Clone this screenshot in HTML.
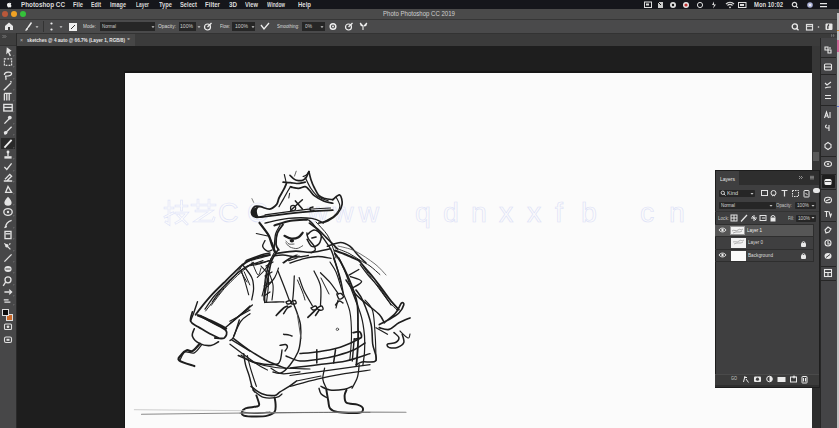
<!DOCTYPE html>
<html><head><meta charset="utf-8">
<style>
*{margin:0;padding:0;box-sizing:border-box}
html,body{width:839px;height:428px;overflow:hidden;background:#1e1e1e;font-family:"Liberation Sans",sans-serif;color:#ddd;position:relative}
.a{position:absolute}
.t{position:absolute;white-space:nowrap;line-height:1;transform-origin:0 0}
svg{position:absolute;overflow:visible}
</style></head><body>
<div class="a" style="left:0px;top:0px;width:839px;height:9px;background:#15161b;"></div>
<div class="a" style="left:0px;top:9px;width:839px;height:10px;background:#4a4a4a;"></div>
<div class="a" style="left:0px;top:19px;width:839px;height:1px;background:#363636;"></div>
<div class="a" style="left:0px;top:20px;width:839px;height:13px;background:#4a4a4b;"></div>
<div class="a" style="left:16px;top:33px;width:823px;height:13.2px;background:#3b3b3b;"></div>
<div class="a" style="left:0px;top:32.6px;width:839px;height:1px;background:#333333;"></div>
<div class="a" style="left:16px;top:33.6px;width:118.5px;height:12.6px;background:#474747;"></div>
<div class="a" style="left:0px;top:33px;width:16px;height:395px;background:#474748;"></div>
<div class="a" style="left:0px;top:33px;width:16px;height:12px;background:#3e3e3e;"></div>
<div class="a" style="left:0px;top:44.5px;width:16px;height:0.8px;background:#333333;"></div>
<div class="a" style="left:16px;top:33px;width:1px;height:395px;background:#2a2a2a;"></div>
<div class="a" style="left:123.5px;top:71.3px;width:690px;height:358px;background:#161616;"></div>
<div class="a" style="left:125px;top:72.8px;width:687px;height:356px;background:#fbfbfb;"></div>
<div class="a" style="left:812px;top:46px;width:8px;height:342px;background:#373737;"></div>
<div class="a" style="left:812px;top:388px;width:8px;height:40px;background:#2d2d2d;"></div>
<div class="a" style="left:812.5px;top:152px;width:6px;height:9px;background:#5a5a5a;"></div>
<div class="a" style="left:820px;top:38px;width:17px;height:390px;background:#444446;"></div>
<div class="a" style="left:820px;top:38px;width:1px;height:390px;background:#262626;"></div>
<div class="a" style="left:837px;top:13px;width:2px;height:415px;background:#c2c2c2;"></div>
<svg style="left:1.5px;top:0px;" width="20" height="9" viewBox="0 0 20 9"><path d="M7.3 3.3c-.6-.4-1.7-.3-2.1.5-.6 1 .1 3.3 1 3.6.4.1.7-.2 1.1-.2s.7.3 1.1.2c.6-.2 1-1.2 1.1-1.6-.7-.3-.9-1.5-.2-2.2-.4-.6-1.4-.6-2-.3zM7.5 2.9c0-.6.4-1 .9-1.1" fill="#f0f0f0"/></svg>
<div class="t" style="left:21px;top:1.91px;font-size:6.3px;font-weight:bold;color:#dcdcdc;transform:scaleX(1.006);">Photoshop CC</div>
<div class="t" style="left:73px;top:1.91px;font-size:6.3px;font-weight:bold;color:#dcdcdc;transform:scaleX(0.921);">File</div>
<div class="t" style="left:91px;top:1.91px;font-size:6.3px;font-weight:bold;color:#dcdcdc;transform:scaleX(0.840);">Edit</div>
<div class="t" style="left:110px;top:1.91px;font-size:6.3px;font-weight:bold;color:#dcdcdc;transform:scaleX(0.879);">Image</div>
<div class="t" style="left:136px;top:1.91px;font-size:6.3px;font-weight:bold;color:#dcdcdc;transform:scaleX(0.773);">Layer</div>
<div class="t" style="left:159px;top:1.91px;font-size:6.3px;font-weight:bold;color:#dcdcdc;transform:scaleX(0.913);">Type</div>
<div class="t" style="left:180px;top:1.91px;font-size:6.3px;font-weight:bold;color:#dcdcdc;transform:scaleX(0.916);">Select</div>
<div class="t" style="left:205px;top:1.91px;font-size:6.3px;font-weight:bold;color:#dcdcdc;transform:scaleX(0.974);">Filter</div>
<div class="t" style="left:229px;top:1.91px;font-size:6.3px;font-weight:bold;color:#dcdcdc;transform:scaleX(0.993);">3D</div>
<div class="t" style="left:245px;top:1.91px;font-size:6.3px;font-weight:bold;color:#dcdcdc;transform:scaleX(0.913);">View</div>
<div class="t" style="left:267px;top:1.91px;font-size:6.3px;font-weight:bold;color:#dcdcdc;transform:scaleX(0.747);">Window</div>
<div class="t" style="left:298px;top:1.91px;font-size:6.3px;font-weight:bold;color:#dcdcdc;transform:scaleX(0.952);">Help</div>
<div class="t" style="left:754px;top:1.91px;font-size:6.3px;font-weight:bold;color:#dcdcdc;transform:scaleX(0.941);">Mon 10:02</div>
<svg style="left:644px;top:1px;" width="60" height="8" viewBox="0 0 60 8"><rect x="0.5" y="1" width="7" height="5.5" fill="none" stroke="#ddd" stroke-width="1"/><rect x="2" y="2.5" width="3" height="2" fill="#ddd"/><path d="M14 1h5v6h-5z" fill="#ccc"/><path d="M14 1l3 3" stroke="#111" stroke-width="1"/><circle cx="29" cy="4" r="3" fill="#ddd"/><circle cx="29" cy="4" r="1.2" fill="#111"/><circle cx="42" cy="4" r="3" fill="#e8e8e8"/><circle cx="42" cy="4" r="1.6" fill="#c03030"/><circle cx="56" cy="4" r="2.6" fill="none" stroke="#ddd" stroke-width="1"/></svg>
<svg style="left:710px;top:1px;" width="40" height="8" viewBox="0 0 40 8"><path d="M4 0.5l-2 3.5h2l-1 3.5 3-4h-2z" fill="#ddd"/><path d="M16 3a6 6 0 0 1 8 0M17.5 4.5a3.5 3.5 0 0 1 5 0" fill="none" stroke="#ddd" stroke-width="1.2"/><circle cx="20" cy="6.3" r="0.9" fill="#ddd"/><rect x="28.5" y="1.5" width="7.5" height="5" fill="none" stroke="#ddd" stroke-width="1"/><rect x="30" y="3" width="4" height="2" fill="#ddd"/></svg>
<svg style="left:790px;top:1px;" width="40" height="8" viewBox="0 0 40 8"><circle cx="4.5" cy="3.5" r="2.2" fill="none" stroke="#ddd" stroke-width="1.2"/><path d="M6 5l1.8 1.8" stroke="#ddd" stroke-width="1.2"/><circle cx="20" cy="4" r="2.8" fill="#aab0d8"/><circle cx="20" cy="4" r="1.3" fill="#eee"/><path d="M30 2.7h7M30 5.7h7" stroke="#e6e6e6" stroke-width="1.3"/></svg>
<div class="a" style="left:2px;top:11.3px;width:6px;height:6px;background:#b8583a;border-radius:50%"></div>
<div class="a" style="left:10.7px;top:11.3px;width:6px;height:6px;background:#f0a224;border-radius:50%"></div>
<div class="a" style="left:19.5px;top:11.3px;width:6px;height:6px;background:#35c23a;border-radius:50%"></div>
<div class="t" style="left:383px;top:10.08px;font-size:8px;font-weight:normal;color:#d0d0d0;transform:scaleX(0.756);">Photo Photoshop CC 2019</div>
<svg style="left:4px;top:21px;" width="12" height="11" viewBox="0 0 12 11"><path d="M5 1.5l-4 3.5v4h8v-4z" fill="#e8e8e8"/><rect x="4" y="6" width="2" height="3" fill="#3e3e3e"/></svg>
<svg style="left:24px;top:21px;" width="10" height="11" viewBox="0 0 10 11"><path d="M7.5 1.5l-3.5 5" stroke="#eee" stroke-width="1.4"/><path d="M3.5 6.5l-1.8 2.8 1.5-.5z" fill="#eee" stroke="#eee" stroke-width="1"/></svg>
<svg style="left:35px;top:25px;" width="4" height="4" viewBox="0 0 4 4"><path d="M0.5 1.2h3l-1.5 1.8z" fill="#ccc"/></svg>
<div class="a" style="left:43px;top:21px;width:1px;height:11px;background:#333;"></div>
<svg style="left:48px;top:21px;" width="8" height="11" viewBox="0 0 8 11"><circle cx="3.5" cy="2.5" r="1.1" fill="#eee"/><circle cx="3.5" cy="8.5" r="1.1" fill="#eee"/></svg>
<svg style="left:59px;top:25px;" width="4" height="4" viewBox="0 0 4 4"><path d="M0.5 1.2h3l-1.5 1.8z" fill="#ccc"/></svg>
<div class="a" style="left:69px;top:22.5px;width:8px;height:8px;background:#f0f0f0;"></div>
<svg style="left:69px;top:22.5px;" width="8" height="8" viewBox="0 0 8 8"><path d="M2 6l4-4" stroke="#333" stroke-width="1"/></svg>
<div class="t" style="left:83px;top:24.05px;font-size:5px;font-weight:normal;color:#dadada;transform:scaleX(0.935);">Mode:</div>
<div class="a" style="left:100px;top:22px;width:55px;height:9px;background:#262626;"></div>
<div class="t" style="left:102px;top:24.05px;font-size:5px;font-weight:normal;color:#cfcfcf;transform:scaleX(0.869);">Normal</div>
<svg style="left:151px;top:25px;" width="4" height="4" viewBox="0 0 4 4"><path d="M0.5 1.2h3l-1.5 1.8z" fill="#ccc"/></svg>
<div class="t" style="left:158px;top:24.05px;font-size:5px;font-weight:normal;color:#dadada;transform:scaleX(0.981);">Opacity:</div>
<div class="a" style="left:178.5px;top:22px;width:17px;height:9px;background:#262626;"></div>
<div class="t" style="left:180px;top:24.05px;font-size:5px;font-weight:normal;color:#cfcfcf;transform:scaleX(1.017);">100%</div>
<svg style="left:197px;top:25px;" width="4" height="4" viewBox="0 0 4 4"><path d="M0.5 1.2h3l-1.5 1.8z" fill="#ccc"/></svg>
<svg style="left:203px;top:22px;" width="10" height="9" viewBox="0 0 10 9"><circle cx="4.5" cy="5" r="3" fill="none" stroke="#eee" stroke-width="1.2"/><path d="M4.5 5l4-4" stroke="#eee" stroke-width="1.2"/></svg>
<div class="t" style="left:220px;top:24.05px;font-size:5px;font-weight:normal;color:#dadada;transform:scaleX(0.837);">Flow:</div>
<div class="a" style="left:232px;top:22px;width:23px;height:9px;background:#262626;"></div>
<div class="t" style="left:235px;top:24.05px;font-size:5px;font-weight:normal;color:#cfcfcf;transform:scaleX(1.017);">100%</div>
<svg style="left:251px;top:25px;" width="4" height="4" viewBox="0 0 4 4"><path d="M0.5 1.2h3l-1.5 1.8z" fill="#ccc"/></svg>
<svg style="left:260px;top:22px;" width="10" height="9" viewBox="0 0 10 9"><path d="M1 3l3 4 5-6" fill="none" stroke="#eee" stroke-width="1.3"/></svg>
<div class="t" style="left:277px;top:24.05px;font-size:5px;font-weight:normal;color:#dadada;transform:scaleX(0.870);">Smoothing:</div>
<div class="a" style="left:302px;top:22px;width:23px;height:9px;background:#262626;"></div>
<div class="t" style="left:305px;top:24.05px;font-size:5px;font-weight:normal;color:#cfcfcf;transform:scaleX(0.969);">0%</div>
<svg style="left:320px;top:25px;" width="4" height="4" viewBox="0 0 4 4"><path d="M0.5 1.2h3l-1.5 1.8z" fill="#ccc"/></svg>
<svg style="left:329px;top:22px;" width="10" height="9" viewBox="0 0 10 9"><circle cx="4" cy="4.5" r="2.8" fill="none" stroke="#eee" stroke-width="1.5"/><circle cx="4" cy="4.5" r="1" fill="#eee"/></svg>
<svg style="left:344px;top:22px;" width="10" height="9" viewBox="0 0 10 9"><circle cx="4.5" cy="5" r="3" fill="none" stroke="#eee" stroke-width="1.2"/><path d="M4.5 5l4-4" stroke="#eee" stroke-width="1.2"/></svg>
<svg style="left:359px;top:22px;" width="10" height="9" viewBox="0 0 10 9"><path d="M1 1l3 3v4M8 1l-3 3M2 1c-1 2 0 3 2 3M7 1c1 2 0 3-2 3" fill="none" stroke="#eee" stroke-width="1.1"/></svg>
<svg style="left:790px;top:22px;" width="48" height="10" viewBox="0 0 48 10"><circle cx="4.8" cy="4.5" r="2.6" fill="none" stroke="#eee" stroke-width="1.3"/><path d="M6.5 6.3l2 2" stroke="#eee" stroke-width="1.3"/><rect x="16.5" y="2.5" width="6" height="5.5" fill="none" stroke="#e0e0e0" stroke-width="1.2"/><path d="M16.5 4.3h6" stroke="#e0e0e0" stroke-width="1"/><circle cx="28.5" cy="5" r="0.8" fill="#ddd"/><rect x="35.5" y="1.5" width="7" height="6.5" rx="1" fill="#e6e6e6"/><path d="M39 2.5c-1.2 1-1.4 3-1 4.5" stroke="#333" stroke-width="1.2" fill="none"/></svg>
<div class="t" style="left:20px;top:37.85px;font-size:5px;font-weight:normal;color:#bbb;transform:scaleX(1.027);">×</div>
<div class="t" style="left:27px;top:37.91px;font-size:5.5px;font-weight:bold;color:#e8e8e8;transform:scaleX(0.841);">sketches @ 4 auto @ 66.7% (Layer 1, RGB/8)</div>
<div class="t" style="left:127px;top:37.85px;font-size:5px;font-weight:normal;color:#ccc;transform:scaleX(1.542);">*</div>
<svg style="left:1px;top:34px;" width="14" height="5" viewBox="0 0 14 5"><path d="M1.5 1l1.5 1.5-1.5 1.5M3.5 1l1.5 1.5-1.5 1.5" fill="none" stroke="#999" stroke-width="0.7"/></svg>
<div class="a" style="left:1px;top:138px;width:14px;height:11px;background:#2a2a2a;"></div>
<svg style="left:2px;top:46px;" width="10" height="10" viewBox="0 0 10 10"><g transform="scale(1.2)"><path d="M4 1l4 3-2 1 1.5 3-1 .5-1.5-3-1.5 1.5z" fill="#e4e4e4"/></g><path d="M11.5 9.5l1 0-1 1z" fill="#aaa"/></svg>
<svg style="left:2px;top:57px;" width="10" height="10" viewBox="0 0 10 10"><g transform="scale(1.2)"><rect x="2" y="1.5" width="6" height="5.5" fill="none" stroke="#ddd" stroke-width="1" stroke-dasharray="1.5 1"/></g><path d="M11.5 9.5l1 0-1 1z" fill="#aaa"/></svg>
<svg style="left:2px;top:68.5px;" width="10" height="10" viewBox="0 0 10 10"><g transform="scale(1.2)"><path d="M2 5c0-3 6-3 6-1s-4 2-5 2c0 1 1 2 0 3" fill="none" stroke="#e4e4e4" stroke-width="1.1"/></g><path d="M11.5 9.5l1 0-1 1z" fill="#aaa"/></svg>
<svg style="left:2px;top:79.5px;" width="10" height="10" viewBox="0 0 10 10"><g transform="scale(1.2)"><path d="M1.5 8.5l6-6" fill="none" stroke="#e4e4e4" stroke-width="1.1"/><path d="M7 1l1 1" fill="none" stroke="#e4e4e4" stroke-width="1.1"/></g><path d="M11.5 9.5l1 0-1 1z" fill="#aaa"/></svg>
<svg style="left:2px;top:91px;" width="10" height="10" viewBox="0 0 10 10"><g transform="scale(1.2)"><path d="M2 2v6M4 2v6M6 2v6M2 2h6" fill="none" stroke="#e4e4e4" stroke-width="1.1"/></g><path d="M11.5 9.5l1 0-1 1z" fill="#aaa"/></svg>
<svg style="left:2px;top:102px;" width="10" height="10" viewBox="0 0 10 10"><g transform="scale(1.2)"><rect x="1.5" y="2" width="7" height="5.5" fill="none" stroke="#e4e4e4" stroke-width="1.1"/><path d="M1.5 4.5h7" fill="none" stroke="#e4e4e4" stroke-width="1.1"/></g><path d="M11.5 9.5l1 0-1 1z" fill="#aaa"/></svg>
<svg style="left:2px;top:113.5px;" width="10" height="10" viewBox="0 0 10 10"><g transform="scale(1.2)"><path d="M2 8l4-4" fill="none" stroke="#e4e4e4" stroke-width="1.1"/><circle cx="6.5" cy="3" r="1.6" fill="#e4e4e4"/></g><path d="M11.5 9.5l1 0-1 1z" fill="#aaa"/></svg>
<svg style="left:2px;top:125px;" width="10" height="10" viewBox="0 0 10 10"><g transform="scale(1.2)"><path d="M2 7.5c1.5 0 2-1 2-2l4-4" fill="none" stroke="#e4e4e4" stroke-width="1.1"/><circle cx="3" cy="6.5" r="1.5" fill="#e4e4e4"/></g><path d="M11.5 9.5l1 0-1 1z" fill="#aaa"/></svg>
<svg style="left:2px;top:137.5px;" width="10" height="10" viewBox="0 0 10 10"><g transform="scale(1.2)"><path d="M2 8l6-6.5" stroke="#f0f0f0" stroke-width="1.5"/></g><path d="M11.5 9.5l1 0-1 1z" fill="#aaa"/></svg>
<svg style="left:2px;top:149px;" width="10" height="10" viewBox="0 0 10 10"><g transform="scale(1.2)"><rect x="2" y="6" width="6" height="2" fill="#e4e4e4"/><path d="M5 6V3" fill="none" stroke="#e4e4e4" stroke-width="1.1"/><circle cx="5" cy="2.5" r="1.2" fill="#e4e4e4"/></g><path d="M11.5 9.5l1 0-1 1z" fill="#aaa"/></svg>
<svg style="left:2px;top:160.5px;" width="10" height="10" viewBox="0 0 10 10"><g transform="scale(1.2)"><path d="M2 5l2 2 4-5" fill="none" stroke="#e4e4e4" stroke-width="1.1"/></g><path d="M11.5 9.5l1 0-1 1z" fill="#aaa"/></svg>
<svg style="left:2px;top:172px;" width="10" height="10" viewBox="0 0 10 10"><g transform="scale(1.2)"><path d="M1.5 7.5h7M2.5 6l4-4 1.5 1.5-4 4" fill="none" stroke="#e4e4e4" stroke-width="1.1"/></g><path d="M11.5 9.5l1 0-1 1z" fill="#aaa"/></svg>
<svg style="left:2px;top:183.5px;" width="10" height="10" viewBox="0 0 10 10"><g transform="scale(1.2)"><path d="M3 7l2-5 3 5z" fill="none" stroke="#e4e4e4" stroke-width="1.1"/></g><path d="M11.5 9.5l1 0-1 1z" fill="#aaa"/></svg>
<svg style="left:2px;top:195px;" width="10" height="10" viewBox="0 0 10 10"><g transform="scale(1.2)"><path d="M5 1.5c2 2 3 3.5 3 5a3 2.5 0 0 1-6 0c0-1.5 1-3 3-5z" fill="#e4e4e4"/></g><path d="M11.5 9.5l1 0-1 1z" fill="#aaa"/></svg>
<svg style="left:2px;top:206px;" width="10" height="10" viewBox="0 0 10 10"><g transform="scale(1.2)"><ellipse cx="5" cy="5" rx="3.5" ry="2.8" fill="none" stroke="#e4e4e4" stroke-width="1.1"/><circle cx="5" cy="5" r="1" fill="#e4e4e4"/></g><path d="M11.5 9.5l1 0-1 1z" fill="#aaa"/></svg>
<svg style="left:2px;top:218px;" width="10" height="10" viewBox="0 0 10 10"><g transform="scale(1.2)"><path d="M3 8c0-3 2-5 5-6" fill="none" stroke="#e4e4e4" stroke-width="1.1"/><path d="M2 8l2-1" fill="none" stroke="#e4e4e4" stroke-width="1.1"/></g><path d="M11.5 9.5l1 0-1 1z" fill="#aaa"/></svg>
<svg style="left:2px;top:229px;" width="10" height="10" viewBox="0 0 10 10"><g transform="scale(1.2)"><rect x="2.5" y="2" width="5" height="6" fill="none" stroke="#e4e4e4" stroke-width="1.1"/><path d="M3 4h4" fill="none" stroke="#e4e4e4" stroke-width="1.1"/></g><path d="M11.5 9.5l1 0-1 1z" fill="#aaa"/></svg>
<svg style="left:2px;top:240.5px;" width="10" height="10" viewBox="0 0 10 10"><g transform="scale(1.2)"><path d="M2 2l5 5M6 3l1-1" fill="none" stroke="#e4e4e4" stroke-width="1.1"/><circle cx="4" cy="4" r="1.4" fill="#e4e4e4"/></g><path d="M11.5 9.5l1 0-1 1z" fill="#aaa"/></svg>
<svg style="left:2px;top:252px;" width="10" height="10" viewBox="0 0 10 10"><g transform="scale(1.2)"><path d="M2 8l6-6" fill="none" stroke="#e4e4e4" stroke-width="1.1"/></g><path d="M11.5 9.5l1 0-1 1z" fill="#aaa"/></svg>
<svg style="left:2px;top:263px;" width="10" height="10" viewBox="0 0 10 10"><g transform="scale(1.2)"><ellipse cx="5" cy="5" rx="3" ry="2.5" fill="#e4e4e4"/><path d="M3 5h4" stroke="#3b3b3b" stroke-width="0.8"/></g><path d="M11.5 9.5l1 0-1 1z" fill="#aaa"/></svg>
<svg style="left:2px;top:274.5px;" width="10" height="10" viewBox="0 0 10 10"><g transform="scale(1.2)"><circle cx="5" cy="4" r="2.5" fill="none" stroke="#e4e4e4" stroke-width="1.1"/><path d="M3 6l-2 3" fill="none" stroke="#e4e4e4" stroke-width="1.1"/></g><path d="M11.5 9.5l1 0-1 1z" fill="#aaa"/></svg>
<svg style="left:2px;top:285.5px;" width="10" height="10" viewBox="0 0 10 10"><g transform="scale(1.2)"><path d="M2 5h6M6 3l2 2-2 2" fill="none" stroke="#e4e4e4" stroke-width="1.1"/></g><path d="M11.5 9.5l1 0-1 1z" fill="#aaa"/></svg>
<svg style="left:2px;top:295px;" width="10" height="10" viewBox="0 0 10 10"><g transform="scale(1.2)"><path d="M1.5 4h4M2 6h5" fill="none" stroke="#e4e4e4" stroke-width="1.1"/></g><path d="M11.5 9.5l1 0-1 1z" fill="#aaa"/></svg>
<div class="a" style="left:6px;top:314px;width:7px;height:7px;background:#c9692a;border:1px solid #ddd"></div>
<div class="a" style="left:2px;top:309px;width:7px;height:7px;background:#0c0c0c;border:1px solid #ddd"></div>
<svg style="left:3px;top:322px;" width="10" height="10" viewBox="0 0 10 10"><rect x="1.5" y="2" width="7" height="5.5" rx="1" fill="none" stroke="#e0e0e0" stroke-width="1.1"/><circle cx="5" cy="4.8" r="1.4" fill="#e0e0e0"/></svg>
<svg style="left:3px;top:335px;" width="10" height="10" viewBox="0 0 10 10"><rect x="1.5" y="2" width="7" height="5.5" rx="1.5" fill="none" stroke="#e0e0e0" stroke-width="1.1"/><rect x="3.5" y="3.8" width="3" height="2" fill="#e0e0e0"/></svg>
<div class="a" style="left:821px;top:57px;width:15px;height:1px;background:#262626;"></div>
<div class="a" style="left:821px;top:74px;width:15px;height:1px;background:#262626;"></div>
<div class="a" style="left:821px;top:105px;width:15px;height:1px;background:#262626;"></div>
<div class="a" style="left:821px;top:156px;width:15px;height:1px;background:#262626;"></div>
<div class="a" style="left:821px;top:174px;width:15px;height:1px;background:#262626;"></div>
<div class="a" style="left:821px;top:189px;width:15px;height:1px;background:#262626;"></div>
<div class="a" style="left:821px;top:221px;width:15px;height:1px;background:#262626;"></div>
<div class="a" style="left:821px;top:266px;width:15px;height:1px;background:#262626;"></div>
<div class="a" style="left:821px;top:280px;width:15px;height:1px;background:#262626;"></div>
<div class="a" style="left:822px;top:175px;width:13px;height:13px;background:#1e1e1e;border-radius:1px"></div>
<svg style="left:823px;top:44.5px;" width="10" height="10" viewBox="0 0 10 10"><path d="M2 2h3v3H2zM5 5h3v3H5z" fill="none" stroke="#e8e8e8" stroke-width="1.1"/><path d="M7 2v2" fill="none" stroke="#e8e8e8" stroke-width="1.1"/></svg>
<svg style="left:823px;top:61.5px;" width="10" height="10" viewBox="0 0 10 10"><rect x="1.5" y="2" width="7" height="6" rx="1" fill="none" stroke="#e8e8e8" stroke-width="1.1"/><path d="M1.5 5h7" fill="none" stroke="#e8e8e8" stroke-width="1.1"/></svg>
<svg style="left:823px;top:79.5px;" width="10" height="10" viewBox="0 0 10 10"><path d="M2 3l2 2 4-3M2 8c2-1 4-1 6-1" fill="none" stroke="#e8e8e8" stroke-width="1.1"/></svg>
<svg style="left:823px;top:92px;" width="10" height="10" viewBox="0 0 10 10"><path d="M2 3.5h6M2 6.5h6" fill="none" stroke="#e8e8e8" stroke-width="1.1"/></svg>
<svg style="left:823px;top:110px;" width="10" height="10" viewBox="0 0 10 10"><path d="M1.5 8l2-6 2 6M2.3 6h2.5M7 2v6" fill="none" stroke="#e8e8e8" stroke-width="1.1"/></svg>
<svg style="left:823px;top:122.5px;" width="10" height="10" viewBox="0 0 10 10"><path d="M6 2v6M4 2c-2 0-2 3 0 3h2" fill="none" stroke="#e8e8e8" stroke-width="1.1"/></svg>
<svg style="left:823px;top:141px;" width="10" height="10" viewBox="0 0 10 10"><path d="M5 1.5l3 2v3l-3 2-3-2v-3z" fill="none" stroke="#e8e8e8" stroke-width="1.1"/></svg>
<svg style="left:823px;top:159px;" width="10" height="10" viewBox="0 0 10 10"><ellipse cx="5" cy="5" rx="3.5" ry="2.5" fill="none" stroke="#e8e8e8" stroke-width="1.1"/><circle cx="5" cy="5" r="1" fill="#e8e8e8"/></svg>
<svg style="left:823px;top:176.5px;" width="10" height="10" viewBox="0 0 10 10"><rect x="1.5" y="2" width="7" height="6" rx="1.5" fill="#f0f0f0"/><path d="M2 4.5h6" stroke="#1e1e1e" stroke-width="0.8"/></svg>
<svg style="left:823px;top:195px;" width="10" height="10" viewBox="0 0 10 10"><ellipse cx="5" cy="5" rx="3.5" ry="2.8" fill="none" stroke="#e8e8e8" stroke-width="1.1"/><path d="M3 6l4-2" fill="none" stroke="#e8e8e8" stroke-width="1.1"/></svg>
<svg style="left:823px;top:208.5px;" width="10" height="10" viewBox="0 0 10 10"><path d="M1.5 2.5h4M3.5 2.5v5.5M6 2.5l1.5 5 1-3" fill="none" stroke="#e8e8e8" stroke-width="1.1"/></svg>
<svg style="left:823px;top:225px;" width="10" height="10" viewBox="0 0 10 10"><path d="M3 8l-1-3 3-3 3 2-2 3z" fill="none" stroke="#e8e8e8" stroke-width="1.1"/></svg>
<svg style="left:823px;top:238px;" width="10" height="10" viewBox="0 0 10 10"><circle cx="5" cy="5" r="3" fill="none" stroke="#e8e8e8" stroke-width="1.1"/><path d="M5 3v3h2" fill="none" stroke="#e8e8e8" stroke-width="1.1"/></svg>
<svg style="left:823px;top:250.5px;" width="10" height="10" viewBox="0 0 10 10"><ellipse cx="5" cy="5" rx="3.5" ry="3" fill="#e8e8e8"/><path d="M3 6.5l4-3" stroke="#3c3c3c" stroke-width="1"/></svg>
<svg style="left:823px;top:268px;" width="10" height="10" viewBox="0 0 10 10"><rect x="1.5" y="1.5" width="7" height="7" fill="none" stroke="#e8e8e8" stroke-width="1.1"/><path d="M1.5 4.5h7M5 4.5v4" fill="none" stroke="#e8e8e8" stroke-width="1.1"/></svg>
<svg style="left:826px;top:33px;" width="10" height="5" viewBox="0 0 10 5"><path d="M5 1.5l1.2 1-1.2 1M7 1.5l1.2 1-1.2 1" fill="none" stroke="#aaa" stroke-width="0.6"/></svg>
<div class="a" style="left:837px;top:40px;width:2px;height:12px;background:#d0679a;"></div>
<div class="a" style="left:837px;top:29.5px;width:2px;height:1.5px;background:#d08a3a;"></div>
<div class="a" style="left:837px;top:106px;width:2px;height:1px;background:#6a7ad0;"></div>
<div class="a" style="left:715px;top:170px;width:105px;height:218px;background:#1d1d1d;"></div>
<div class="a" style="left:716px;top:171px;width:103px;height:216px;background:#3f3f40;"></div>
<div class="a" style="left:739px;top:171px;width:80px;height:14px;background:#2e2e2e;"></div>
<div class="t" style="left:720px;top:176.55px;font-size:5px;font-weight:normal;color:#e6e6e6;transform:scaleX(0.999);">Layers</div>
<svg style="left:798px;top:175px;" width="20" height="6" viewBox="0 0 20 6"><path d="M1 1l1.5 1.5L1 4M3 1l1.5 1.5L3 4" fill="none" stroke="#bbb" stroke-width="0.7"/><path d="M12 1.3h4M12 2.6h4M12 3.9h4" stroke="#bbb" stroke-width="0.6"/></svg>
<div class="a" style="left:719px;top:189.5px;width:36px;height:7px;background:#262626;border-radius:1px"></div>
<svg style="left:720px;top:190px;" width="6" height="6" viewBox="0 0 6 6"><circle cx="2.8" cy="2.8" r="1.7" fill="none" stroke="#ddd" stroke-width="0.9"/><path d="M4 4l1.5 1.5" stroke="#ddd" stroke-width="0.9"/></svg>
<div class="t" style="left:727px;top:190.55px;font-size:5px;font-weight:normal;color:#d8d8d8;transform:scaleX(1.099);">Kind</div>
<svg style="left:750px;top:191.5px;" width="4" height="4" viewBox="0 0 4 4"><path d="M0.5 1h3l-1.5 1.8z" fill="#ccc"/></svg>
<svg style="left:759.5px;top:188.5px;" width="9" height="9" viewBox="0 0 9 9"><rect x="1.5" y="1.5" width="6" height="5" fill="none" stroke="#e4e4e4" stroke-width="1"/><path d="M1.5 6.5h6" fill="none" stroke="#e4e4e4" stroke-width="1"/></svg>
<svg style="left:768.5px;top:188.5px;" width="9" height="9" viewBox="0 0 9 9"><circle cx="4.5" cy="4" r="2.5" fill="none" stroke="#e4e4e4" stroke-width="1"/><path d="M3 7l1.5-1 1.5 1" fill="none" stroke="#e4e4e4" stroke-width="1"/></svg>
<svg style="left:779.5px;top:188.5px;" width="9" height="9" viewBox="0 0 9 9"><path d="M1.5 1.5h6M4.5 1.5v6" stroke="#e4e4e4" stroke-width="1.2"/></svg>
<svg style="left:790.5px;top:188.5px;" width="9" height="9" viewBox="0 0 9 9"><rect x="1.5" y="1.5" width="6" height="6" fill="none" stroke="#e4e4e4" stroke-width="1" stroke-dasharray="1.5 1"/></svg>
<svg style="left:801.5px;top:188.5px;" width="9" height="9" viewBox="0 0 9 9"><rect x="2" y="1.5" width="5" height="6.5" rx="0.5" fill="none" stroke="#e4e4e4" stroke-width="1"/><path d="M3.5 4l2 2" fill="none" stroke="#e4e4e4" stroke-width="1"/></svg>
<div class="a" style="left:813px;top:188px;width:7px;height:5px;background:#e8e8e8;border-radius:2.5px"></div>
<div class="a" style="left:719px;top:202px;width:57px;height:7px;background:#262626;border-radius:1px"></div>
<div class="t" style="left:721px;top:203.05px;font-size:5px;font-weight:normal;color:#d8d8d8;transform:scaleX(0.869);">Normal</div>
<svg style="left:769px;top:203.5px;" width="4" height="4" viewBox="0 0 4 4"><path d="M0.5 1h3l-1.5 1.8z" fill="#ccc"/></svg>
<div class="t" style="left:776px;top:203.05px;font-size:5px;font-weight:normal;color:#c8c8c8;transform:scaleX(0.872);">Opacity:</div>
<div class="a" style="left:795px;top:202px;width:21px;height:7px;background:#262626;border-radius:1px"></div>
<div class="t" style="left:797px;top:203.05px;font-size:5px;font-weight:normal;color:#d0d0d0;transform:scaleX(0.938);">100%</div>
<svg style="left:811px;top:203.5px;" width="4" height="4" viewBox="0 0 4 4"><path d="M0.5 1h3l-1.5 1.8z" fill="#ccc"/></svg>
<div class="a" style="left:715px;top:210.5px;width:104px;height:1px;background:#333333;"></div>
<div class="t" style="left:718px;top:215.55px;font-size:5px;font-weight:normal;color:#c8c8c8;transform:scaleX(0.920);">Lock:</div>
<svg style="left:730px;top:214px;" width="8" height="8" viewBox="0 0 8 8"><rect x="1" y="1" width="6" height="6" fill="none" stroke="#e4e4e4" stroke-width="1"/><path d="M4 1v6M1 4h6" fill="none" stroke="#e4e4e4" stroke-width="1" stroke-width="0.7"/></svg>
<svg style="left:740px;top:214px;" width="8" height="8" viewBox="0 0 8 8"><path d="M1 7.5l6-6.5" stroke="#e8e8e8" stroke-width="1.2"/></svg>
<svg style="left:750px;top:214px;" width="8" height="8" viewBox="0 0 8 8"><path d="M4 1v6M1 4h6M2 2l4 4" fill="none" stroke="#e4e4e4" stroke-width="1" stroke-width="0.8"/></svg>
<svg style="left:759px;top:214px;" width="8" height="8" viewBox="0 0 8 8"><rect x="1" y="1.5" width="6" height="5" fill="none" stroke="#e4e4e4" stroke-width="1"/><path d="M3 4h3" fill="none" stroke="#e4e4e4" stroke-width="1"/></svg>
<svg style="left:769px;top:214px;" width="8" height="8" viewBox="0 0 8 8"><path d="M2 3.5a2 2 0 0 1 4 0" fill="none" stroke="#e4e4e4" stroke-width="1"/><rect x="1.5" y="3.5" width="5" height="4" fill="#e8e8e8"/></svg>
<div class="t" style="left:788px;top:215.55px;font-size:5px;font-weight:normal;color:#c8c8c8;transform:scaleX(0.772);">Fill:</div>
<div class="a" style="left:796px;top:214.5px;width:20px;height:7px;background:#262626;border-radius:1px"></div>
<div class="t" style="left:798px;top:215.55px;font-size:5px;font-weight:normal;color:#d0d0d0;transform:scaleX(0.938);">100%</div>
<svg style="left:811px;top:216px;" width="4" height="4" viewBox="0 0 4 4"><path d="M0.5 1h3l-1.5 1.8z" fill="#ccc"/></svg>
<div class="a" style="left:715px;top:223.5px;width:98px;height:1px;background:#2e2e2e;"></div>
<div class="a" style="left:715px;top:224.5px;width:98px;height:11.5px;background:#565656;"></div>
<div class="a" style="left:715px;top:236px;width:98px;height:1px;background:#2e2e2e;"></div>
<div class="a" style="left:715px;top:248.5px;width:98px;height:1px;background:#2e2e2e;"></div>
<div class="a" style="left:715px;top:261px;width:98px;height:1px;background:#2e2e2e;"></div>
<div class="a" style="left:813px;top:223.5px;width:1px;height:38px;background:#2e2e2e;"></div>
<svg style="left:717.5px;top:226px;" width="9" height="8" viewBox="0 0 9 8"><path d="M1 4c1.5-2.5 5.5-2.5 7 0-1.5 2.5-5.5 2.5-7 0z" fill="none" stroke="#eee" stroke-width="1"/><circle cx="4.5" cy="4" r="1.2" fill="#eee"/></svg>
<svg style="left:717.5px;top:251px;" width="9" height="8" viewBox="0 0 9 8"><path d="M1 4c1.5-2.5 5.5-2.5 7 0-1.5 2.5-5.5 2.5-7 0z" fill="none" stroke="#eee" stroke-width="1"/><circle cx="4.5" cy="4" r="1.2" fill="#eee"/></svg>
<div class="a" style="left:729.5px;top:225.5px;width:15.5px;height:9.5px;background:#f2f2f2;border:0.5px solid #999"></div>
<svg style="left:730px;top:226px;" width="15" height="9" viewBox="0 0 15 9"><path d="M2 5c2-2 4 1 6-1s3 1 5-1M3 7l3-1 4 0 2-1" fill="none" stroke="#777" stroke-width="0.6"/></svg>
<div class="a" style="left:731px;top:238px;width:14.5px;height:9.5px;background:#f2f2f2;"></div>
<svg style="left:731px;top:238px;" width="15" height="9" viewBox="0 0 15 9"><path d="M2 4c2-1 4 1 6-1s3 1 5-1M3 6l3-1 4 0 2-1" fill="none" stroke="#888" stroke-width="0.6"/></svg>
<div class="a" style="left:731px;top:251px;width:14.5px;height:9.5px;background:#fafafa;"></div>
<div class="t" style="left:747px;top:227.55px;font-size:5px;font-weight:normal;color:#eeeeee;transform:scaleX(0.899);">Layer 1</div>
<div class="t" style="left:748px;top:240.05px;font-size:5px;font-weight:normal;color:#dddddd;transform:scaleX(0.899);">Layer 0</div>
<div class="t" style="left:748px;top:253.05px;font-size:5px;font-weight:normal;color:#dddddd;transform:scaleX(0.937);">Background</div>
<svg style="left:799.5px;top:239.5px;" width="7" height="8" viewBox="0 0 7 8"><rect x="1" y="3" width="5" height="4" rx="1" fill="#e8e8e8"/><path d="M2 3.2a1.5 1.5 0 0 1 3 0" fill="none" stroke="#e8e8e8" stroke-width="1"/></svg>
<svg style="left:799.5px;top:251.5px;" width="7" height="8" viewBox="0 0 7 8"><rect x="1" y="3" width="5" height="4" rx="1" fill="#e8e8e8"/><path d="M2 3.2a1.5 1.5 0 0 1 3 0" fill="none" stroke="#e8e8e8" stroke-width="1"/></svg>
<div class="a" style="left:715px;top:373.5px;width:104px;height:1px;background:#4a4a4a;"></div>
<div class="a" style="left:715px;top:374.5px;width:104px;height:10px;background:#3b3b3b;"></div>
<div class="a" style="left:715px;top:384.5px;width:104px;height:2.5px;background:#2f2f2f;"></div>
<div class="t" style="left:731px;top:377.30px;font-size:4.5px;font-weight:normal;color:#cfcfcf;transform:scaleX(0.857);">GO</div>
<svg style="left:741.5px;top:375px;" width="9" height="9" viewBox="0 0 9 9"><path d="M1.5 7l1.5-6M2 2.5h3M4 4l2.5 3.5" fill="none" stroke="#eaeaea" stroke-width="1"/></svg>
<svg style="left:753.0px;top:375px;" width="9" height="9" viewBox="0 0 9 9"><rect x="1" y="1.5" width="7" height="5.5" rx="1" fill="#eaeaea"/><circle cx="4.5" cy="4.2" r="1.6" fill="#3d3d3d"/></svg>
<svg style="left:764.5px;top:375px;" width="9" height="9" viewBox="0 0 9 9"><circle cx="4.5" cy="4" r="2.8" fill="none" stroke="#eaeaea" stroke-width="1"/><path d="M4.5 1.2a2.8 2.8 0 0 1 0 5.6z" fill="#eaeaea"/></svg>
<svg style="left:776.5px;top:375px;" width="9" height="9" viewBox="0 0 9 9"><rect x="0.5" y="2" width="8" height="5" fill="#eaeaea"/></svg>
<svg style="left:788.5px;top:375px;" width="9" height="9" viewBox="0 0 9 9"><rect x="1.5" y="2" width="6" height="5" fill="none" stroke="#eaeaea" stroke-width="1"/><path d="M5 0.5v3M3.5 2h3" fill="none" stroke="#eaeaea" stroke-width="1"/></svg>
<svg style="left:800.0px;top:375px;" width="9" height="9" viewBox="0 0 9 9"><rect x="2" y="1.5" width="5" height="6.5" rx="0.5" fill="none" stroke="#eaeaea" stroke-width="1"/><path d="M3.5 3v3.5M5.5 3v3.5" fill="none" stroke="#eaeaea" stroke-width="1" stroke-width="0.7"/></svg>
<svg style="left:0;top:0" width="839" height="428" viewBox="0 0 839 428"><text x="218" y="221.7" font-size="28.5" font-family="Liberation Sans" fill="none" stroke="#dce1f7" stroke-width="0.65">C</text><text x="247" y="221.7" font-size="28.5" font-family="Liberation Sans" fill="none" stroke="#dce1f7" stroke-width="0.65">C</text><text x="307.5" y="221.7" font-size="28.5" font-family="Liberation Sans" fill="none" stroke="#dce1f7" stroke-width="0.65">w</text><text x="333" y="221.7" font-size="28.5" font-family="Liberation Sans" fill="none" stroke="#dce1f7" stroke-width="0.65">w</text><text x="358.6" y="221.7" font-size="28.5" font-family="Liberation Sans" fill="none" stroke="#dce1f7" stroke-width="0.65">w</text><text x="415" y="221.7" font-size="28.5" font-family="Liberation Sans" fill="none" stroke="#dce1f7" stroke-width="0.65">q</text><text x="443" y="221.7" font-size="28.5" font-family="Liberation Sans" fill="none" stroke="#dce1f7" stroke-width="0.65">d</text><text x="471" y="221.7" font-size="28.5" font-family="Liberation Sans" fill="none" stroke="#dce1f7" stroke-width="0.65">n</text><text x="499" y="221.7" font-size="28.5" font-family="Liberation Sans" fill="none" stroke="#dce1f7" stroke-width="0.65">x</text><text x="527" y="221.7" font-size="28.5" font-family="Liberation Sans" fill="none" stroke="#dce1f7" stroke-width="0.65">x</text><text x="555" y="221.7" font-size="28.5" font-family="Liberation Sans" fill="none" stroke="#dce1f7" stroke-width="0.65">f</text><text x="581" y="221.7" font-size="28.5" font-family="Liberation Sans" fill="none" stroke="#dce1f7" stroke-width="0.65">b</text><text x="640" y="221.7" font-size="28.5" font-family="Liberation Sans" fill="none" stroke="#dce1f7" stroke-width="0.65">c</text><text x="669" y="221.7" font-size="28.5" font-family="Liberation Sans" fill="none" stroke="#dce1f7" stroke-width="0.65">n</text><g fill="none" stroke="#e0e4f8" stroke-width="2.6" stroke-linecap="square"><path d="M165 208h8M169 201v23l-3-2M165 217l8-4M176 206h11M181.5 201v9M176 213h11l-6 7-5 3M178 215l9 9"/><path d="M192 205h23M198 200v8M209 200v8M196 211h15l-15 10h17l1-3"/></g><g fill="none" stroke="#fbfbfb" stroke-width="1.2" stroke-linecap="square"><path d="M165 208h8M169 201v23l-3-2M165 217l8-4M176 206h11M181.5 201v9M176 213h11l-6 7-5 3M178 215l9 9"/><path d="M192 205h23M198 200v8M209 200v8M196 211h15l-15 10h17l1-3"/></g></svg>
<svg style="left:0;top:0" width="839" height="428" viewBox="0 0 839 428"><g fill="none" stroke-linecap="round" stroke-linejoin="round"><path d="M284.3 174.5C284.5 175.3 285.2 178.1 285.5 179.4C285.8 180.8 285.9 182.1 286.0 182.6" stroke="#1e1e1e" stroke-width="1.12"/><path d="M296.2 171.2L294.5 176.1" stroke="#444" stroke-width="0.84"/><path d="M290.0 175.3C290.8 176.0 293.1 178.5 294.5 179.4C295.9 180.3 297.2 180.5 298.6 180.6C300.0 180.7 301.5 180.7 302.7 180.2C303.9 179.7 305.0 179.1 306.0 177.7C307.0 176.3 308.4 172.6 308.9 171.6" stroke="#1e1e1e" stroke-width="1.68"/><path d="M303.1 176.5C303.6 176.3 305.0 176.1 306.0 175.3C307.0 174.5 308.4 172.2 308.9 171.6" stroke="#1e1e1e" stroke-width="1.12"/><path d="M283.1 182.2C284.3 182.3 288.2 182.4 290.5 182.6C292.8 182.8 294.6 183.6 297.0 183.5C299.4 183.4 303.8 182.4 305.2 182.2" stroke="#1e1e1e" stroke-width="1.68"/><path d="M308.9 171.6C309.2 172.9 310.0 176.8 310.9 179.4C311.8 182.1 312.8 184.8 314.2 187.5C315.6 190.2 317.3 193.9 319.1 195.7C320.9 197.5 322.7 197.8 325.0 198.5C327.3 199.2 331.5 199.5 332.8 199.7" stroke="#1e1e1e" stroke-width="1.68"/><path d="M305.2 177.5C306.1 179.2 308.5 184.9 310.6 188.0C312.7 191.1 314.7 194.0 317.6 196.2C320.5 198.3 326.4 200.1 328.1 200.9" stroke="#1e1e1e" stroke-width="1.26"/><path d="M290.5 186.7C290.9 186.8 291.5 187.2 292.9 187.5C294.2 187.8 296.6 188.5 298.6 188.4C300.7 188.3 303.4 186.4 305.2 186.7C307.0 187.0 307.8 188.5 309.3 190.0C310.8 191.5 311.8 193.9 314.2 195.7C316.6 197.5 320.4 199.7 323.5 200.9C326.6 202.2 331.2 202.8 332.8 203.2" stroke="#1e1e1e" stroke-width="1.68"/><path d="M286.4 183.5C286.0 184.4 285.1 186.8 283.9 189.2C282.7 191.6 280.2 195.5 279.0 198.0C277.8 200.5 278.2 202.6 276.7 204.4C275.1 206.2 272.4 208.7 269.7 209.1C267.0 209.5 262.9 207.1 260.4 206.7C257.9 206.3 256.0 205.7 254.5 206.7C253.0 207.7 251.3 210.8 251.5 212.6C251.7 214.3 253.4 216.6 255.7 217.2C257.9 217.8 263.4 216.3 265.0 216.1" stroke="#1e1e1e" stroke-width="1.82"/><path d="M290.5 186.7C290.1 187.4 289.1 188.9 288.0 190.8C286.9 192.7 285.5 195.3 284.0 198.0C282.5 200.7 279.8 205.2 279.0 206.7" stroke="#1e1e1e" stroke-width="1.26"/><path d="M289.6 193.3L288.8 198.0" stroke="#1e1e1e" stroke-width="0.98"/><path d="M259.5 206.5C256 206.8 252.5 208.5 251.8 211.5C251.3 214.5 254 217.5 259.5 218C257.5 215.5 256.5 212.5 257 210C257.5 208.5 258.5 207.3 259.5 206.5Z" fill="#1e1e1e"/><path d="M260.4 217.2C265.1 216.6 279.8 214.7 288.4 213.7C297.0 212.7 304.4 212.0 311.8 211.4C319.2 210.8 329.3 210.4 332.8 210.2" stroke="#1e1e1e" stroke-width="1.68"/><path d="M265.0 214.9C269.3 214.3 283.3 212.4 290.7 211.4C298.1 210.4 302.8 209.7 309.4 209.1C316.0 208.5 327.0 208.2 330.5 208.0" stroke="#1e1e1e" stroke-width="1.12"/><path d="M251.9 198.6L253.7 202.4" stroke="#666" stroke-width="0.84"/><circle cx="293.1" cy="207.9" r="2.6" stroke="#222" stroke-width="1.2" fill="none"/><path d="M295.4 200.9L302.4 209.1" stroke="#1e1e1e" stroke-width="1.54"/><path d="M302.4 199.7L290.7 210.2" stroke="#1e1e1e" stroke-width="1.54"/><path d="M313.0 207.0C312.5 207.2 310.3 207.3 310.0 208.0C309.7 208.7 310.3 210.6 311.0 211.0C311.7 211.4 313.5 210.6 314.0 210.5" stroke="#1e1e1e" stroke-width="1.54"/><path d="M332.8 199.7C334.0 198.9 338.2 194.2 339.8 195.0C341.4 195.8 342.5 201.3 342.1 204.4C341.7 207.5 339.8 211.0 337.5 213.7C335.2 216.4 331.2 219.1 328.1 220.7C325.0 222.3 320.4 222.7 318.8 223.1" stroke="#1e1e1e" stroke-width="1.68"/><path d="M336.3 197.4C336.9 198.9 340.2 203.6 339.8 206.7C339.4 209.8 336.7 213.5 334.0 216.0C331.3 218.5 325.2 220.9 323.5 221.9" stroke="#1e1e1e" stroke-width="1.12"/><path d="M265.0 223.1C268.9 222.3 280.6 219.2 288.4 218.4C296.2 217.6 305.9 217.6 311.8 218.4C317.7 219.2 321.6 222.3 323.5 223.1" stroke="#1e1e1e" stroke-width="1.40"/><path d="M274.4 225.4C277.1 224.6 285.2 221.7 290.7 220.7C296.1 219.7 304.4 219.8 307.1 219.6" stroke="#1e1e1e" stroke-width="2.10"/><path d="M284.5 235.8C285.7 236.3 289.2 238.4 291.5 238.6C293.8 238.8 296.6 238.2 298.5 237.2C300.4 236.2 302.0 233.5 302.7 232.8" stroke="#1e1e1e" stroke-width="2.24"/><ellipse cx="291.9" cy="240.8" rx="2.2" ry="1.7" fill="#1e1e1e"/><path d="M286.0 241.0C286.5 241.5 287.7 243.5 289.0 244.0C290.3 244.5 293.2 244.0 294.0 244.0" stroke="#555" stroke-width="0.98"/><path d="M283.0 224.6C282.1 226.0 278.6 229.7 277.4 233.0C276.2 236.3 275.8 241.5 276.0 244.3C276.2 247.1 278.3 249.0 278.8 249.9" stroke="#1e1e1e" stroke-width="1.82"/><path d="M280.2 225.0C279.4 226.5 276.6 230.2 275.6 234.0C274.6 237.8 274.4 245.7 274.2 248.0" stroke="#1e1e1e" stroke-width="1.26"/><path d="M307.1 234.8C308.3 234.0 311.8 230.1 314.1 230.1C316.4 230.1 320.3 232.5 321.1 234.8C321.9 237.1 320.4 242.2 318.8 244.1C317.2 246.0 313.8 247.2 311.8 246.4C309.9 245.6 307.9 240.6 307.1 239.4" stroke="#1e1e1e" stroke-width="1.54"/><path d="M312.0 238.0L316.0 237.0" stroke="#1e1e1e" stroke-width="1.68"/><path d="M306.9 233.0C307.1 233.9 307.1 236.5 308.3 238.6C309.5 240.7 312.7 243.8 313.9 245.7C315.1 247.6 315.8 248.7 315.3 249.9C314.8 251.1 311.8 252.2 311.1 252.7" stroke="#1e1e1e" stroke-width="1.40"/><path d="M285.9 242.9C286.6 243.6 288.1 246.1 290.0 247.0C291.9 247.9 294.9 248.7 297.0 248.5C299.1 248.3 301.8 246.2 302.7 245.7" stroke="#555" stroke-width="0.98"/><path d="M276.7 253.5C279.8 253.1 289.5 251.3 295.4 251.1C301.2 250.9 305.9 252.7 311.8 252.3C317.7 251.9 327.4 249.4 330.5 248.8" stroke="#1e1e1e" stroke-width="1.68"/><path d="M273.2 256.0C274.8 255.8 279.0 254.8 283.0 255.0C287.0 255.2 292.8 256.9 297.0 257.0C301.2 257.1 306.4 255.8 308.3 255.5" stroke="#1e1e1e" stroke-width="1.40"/><path d="M290.0 263.0C292.5 262.2 300.3 259.5 305.0 258.4C309.7 257.3 313.7 256.5 318.0 256.5C322.3 256.5 328.8 258.1 331.0 258.4" stroke="#1e1e1e" stroke-width="1.40"/><path d="M283.0 262.5C284.2 261.8 287.7 259.2 290.0 258.0C292.3 256.8 295.8 255.5 297.0 255.0" stroke="#1e1e1e" stroke-width="1.26"/><path d="M288.7 260.7L297.0 258.0" stroke="#1e1e1e" stroke-width="1.26"/><path d="M259.5 222.8C260.3 223.9 262.9 227.2 264.5 229.4C266.1 231.6 267.8 233.4 269.0 236.0C270.2 238.6 271.0 242.3 272.0 245.0C273.0 247.7 274.5 250.8 275.0 252.0" stroke="#1e1e1e" stroke-width="2.24"/><path d="M261.0 224.5C262.1 226.1 265.8 231.1 267.7 234.3C269.6 237.6 271.2 240.6 272.6 244.0C274.0 247.4 275.4 253.2 276.0 255.0" stroke="#1e1e1e" stroke-width="1.26"/><path d="M256.3 233.5L267.7 236.0" stroke="#1e1e1e" stroke-width="1.12"/><path d="M265.0 240.6C264.6 241.6 262.3 244.7 262.7 246.4C263.1 248.2 265.8 250.5 267.4 251.1C269.0 251.7 271.3 250.1 272.1 249.9" stroke="#1e1e1e" stroke-width="1.40"/><path d="M309.4 223.1C311.0 224.3 315.7 227.4 318.8 230.1C321.9 232.8 325.0 236.3 328.1 239.4C331.2 242.5 335.9 247.2 337.5 248.8" stroke="#1e1e1e" stroke-width="1.68"/><path d="M308.7 220.0C309.6 220.9 311.8 222.5 314.3 225.6C316.8 228.7 320.8 234.6 323.6 238.7C326.4 242.8 328.9 245.2 331.1 249.9C333.3 254.6 335.1 261.4 336.7 266.7C338.3 272.0 339.9 279.2 340.5 281.7" stroke="#1e1e1e" stroke-width="1.40"/><path d="M316.0 222.0C317.9 224.2 324.6 230.7 327.4 235.0C330.2 239.3 331.6 244.2 333.0 248.0C334.4 251.8 335.5 256.3 336.0 258.0" stroke="#1e1e1e" stroke-width="0.98"/><path d="M270.0 255.0C268.2 255.3 263.2 255.6 259.2 256.8C255.2 258.0 250.1 259.9 246.0 262.4C241.9 264.9 238.6 268.4 234.9 271.8C231.2 275.2 227.3 279.3 223.6 283.0C219.8 286.7 216.1 290.1 212.4 294.2C208.7 298.2 204.0 303.9 201.2 307.3C198.4 310.7 196.5 313.6 195.6 314.8" stroke="#1e1e1e" stroke-width="1.82"/><path d="M262.9 260.6C259.8 261.8 250.1 264.3 244.2 268.0C238.3 271.7 232.4 278.3 227.4 283.0C222.4 287.7 218.0 291.6 214.3 296.0C210.6 300.4 206.6 307.0 205.0 309.2" stroke="#1e1e1e" stroke-width="1.26"/><path d="M253.6 262.4C250.8 264.3 242.0 269.2 236.7 273.6C231.4 278.0 225.9 283.9 221.8 288.6C217.8 293.3 214.0 299.5 212.4 301.7" stroke="#1e1e1e" stroke-width="1.12"/><path d="M242.3 264.3C243.9 266.5 249.8 273.3 251.7 277.4C253.6 281.4 253.6 284.9 253.6 288.6C253.6 292.3 252.0 297.9 251.7 299.8" stroke="#1e1e1e" stroke-width="1.26"/><path d="M244.2 271.8L249.8 284.9" stroke="#1e1e1e" stroke-width="0.98"/><path d="M246.0 260.6C248.5 259.7 257.0 256.3 261.0 255.0C265.0 253.7 268.5 253.3 270.0 253.0" stroke="#1e1e1e" stroke-width="1.40"/><path d="M251.7 264.3C253.6 264.0 259.9 263.0 263.0 262.4C266.1 261.8 268.8 260.9 270.0 260.6" stroke="#1e1e1e" stroke-width="1.26"/><path d="M257.3 277.4C258.6 276.2 262.9 272.2 264.8 270.0C266.7 267.8 267.9 265.2 268.5 264.3" stroke="#1e1e1e" stroke-width="1.12"/><path d="M261.0 266.0C262.2 267.9 267.6 271.4 268.5 277.4C269.4 283.3 266.9 297.6 266.6 301.7" stroke="#1e1e1e" stroke-width="1.12"/><path d="M199.9 315.6C202.1 316.8 208.7 320.5 213.0 323.0C217.3 325.5 224.1 328.1 226.0 330.6C227.9 333.1 226.0 336.8 224.2 338.0C222.3 339.2 216.4 338.0 214.9 338.0" stroke="#1e1e1e" stroke-width="1.82"/><path d="M192.4 311.9C192.1 313.4 189.7 318.7 190.6 321.2C191.5 323.7 194.6 324.6 198.0 326.8C201.4 329.0 207.6 332.4 211.0 334.3C214.4 336.2 217.3 337.4 218.6 338.0" stroke="#1e1e1e" stroke-width="1.68"/><path d="M197.5 301.7C196.9 303.6 194.8 309.7 193.7 312.9C192.5 316.1 191.1 319.6 190.6 321.0" stroke="#1e1e1e" stroke-width="1.40"/><path d="M198.0 315.4C200.2 316.3 206.3 318.8 211.0 321.0C215.7 323.2 223.5 327.2 226.0 328.5" stroke="#1e1e1e" stroke-width="2.52"/><path d="M194.3 328.7C194.0 329.9 191.5 333.7 192.4 336.2C193.3 338.7 196.8 342.1 199.9 343.6C203.0 345.2 207.9 345.8 211.0 345.5C214.1 345.2 217.3 342.4 218.6 341.8" stroke="#1e1e1e" stroke-width="1.54"/><path d="M199.9 343.6C198.7 344.9 194.6 350.0 192.4 351.1C190.2 352.2 188.7 349.6 186.8 350.2C184.9 350.8 182.4 353.2 181.2 354.9C179.9 356.6 177.1 358.6 179.3 360.5C181.5 362.4 191.8 365.1 194.3 366.0" stroke="#1e1e1e" stroke-width="2.24"/><path d="M201.8 344.6C200.6 346.0 197.1 351.7 194.3 352.9C191.5 354.1 187.3 350.9 185.0 352.0C182.7 353.1 181.1 358.2 180.3 359.5" stroke="#1e1e1e" stroke-width="1.26"/><path d="M250.0 306.0C247.6 308.2 239.7 315.4 235.4 319.2C231.1 322.9 226.1 326.9 224.2 328.5" stroke="#1e1e1e" stroke-width="1.40"/><path d="M229.8 321.2L250.0 310.0" stroke="#1e1e1e" stroke-width="1.26"/><path d="M233.6 336.2C234.8 333.7 238.3 324.9 241.0 321.2C243.7 317.4 248.5 314.9 250.0 313.7" stroke="#1e1e1e" stroke-width="1.26"/><path d="M231.7 339.9L250.0 351.1" stroke="#1e1e1e" stroke-width="1.26"/><path d="M252.4 305.0C250.5 306.6 244.9 311.2 241.2 314.3C237.5 317.4 231.9 322.1 230.0 323.6" stroke="#1e1e1e" stroke-width="1.26"/><path d="M248.7 308.7L233.7 320.0" stroke="#1e1e1e" stroke-width="1.12"/><path d="M239.3 320.0C238.4 322.8 235.2 333.3 233.7 336.7C232.1 340.1 230.6 339.9 230.0 340.5" stroke="#1e1e1e" stroke-width="1.40"/><path d="M233.7 338.6C236.2 340.5 243.1 346.1 248.7 349.8C254.3 353.5 261.2 357.9 267.4 361.0C273.6 364.1 282.9 367.2 286.0 368.5" stroke="#1e1e1e" stroke-width="1.54"/><path d="M230.0 344.2C232.5 346.1 240.3 352.0 245.0 355.4C249.7 358.8 254.3 362.4 258.0 364.8C261.7 367.2 265.8 369.1 267.4 370.0" stroke="#1e1e1e" stroke-width="1.26"/><path d="M241.0 355.0C242.8 356.2 246.2 359.9 252.0 362.0C257.8 364.1 265.8 366.3 275.5 367.5C285.2 368.7 304.2 368.8 310.0 369.0" stroke="#1e1e1e" stroke-width="1.12"/><path d="M241.2 270.5C241.8 272.4 243.8 277.6 245.0 281.7C246.2 285.8 248.1 292.6 248.7 294.8" stroke="#1e1e1e" stroke-width="1.12"/><path d="M244.9 262.0C246.8 261.5 252.0 260.1 256.0 259.0C260.0 257.9 266.8 256.1 269.0 255.5" stroke="#1e1e1e" stroke-width="1.26"/><path d="M246.7 266.2C248.6 265.9 254.3 265.2 258.0 264.3C261.7 263.4 267.2 261.2 269.0 260.6" stroke="#1e1e1e" stroke-width="1.12"/><path d="M252.0 262.0C253.0 264.2 256.5 274.0 258.0 275.0C259.5 276.0 260.5 269.2 261.0 268.0" stroke="#1e1e1e" stroke-width="0.98"/><path d="M264.0 300.0C264.2 296.2 264.3 283.9 265.5 277.0C266.7 270.1 270.1 261.8 271.0 258.7" stroke="#1e1e1e" stroke-width="1.26"/><path d="M267.0 287.0C268.3 285.4 272.9 280.6 274.8 277.4C276.7 274.2 277.9 269.6 278.5 268.0" stroke="#1e1e1e" stroke-width="1.12"/><path d="M205.6 311.0C207.8 308.2 214.6 299.2 218.7 294.2C222.8 289.2 226.2 285.4 229.9 281.0C233.6 276.6 239.2 270.2 241.0 268.0" stroke="#1e1e1e" stroke-width="0.98"/><path d="M211.2 305.4C213.4 302.6 219.9 293.6 224.3 288.6C228.7 283.6 233.4 279.2 237.4 275.5C241.4 271.8 246.7 267.8 248.6 266.2" stroke="#1e1e1e" stroke-width="0.98"/><path d="M241.0 272.0L247.0 282.0" stroke="#1e1e1e" stroke-width="0.98"/><path d="M277.9 249.9C276.8 251.8 273.0 256.8 271.4 261.4C269.8 266.0 269.2 272.2 268.1 277.7C267.0 283.1 265.4 290.0 264.8 294.1C264.2 298.2 264.8 300.9 264.8 302.3" stroke="#1e1e1e" stroke-width="1.68"/><path d="M274.0 253.0C273.0 255.2 269.3 261.5 268.0 266.0C266.7 270.5 267.0 275.0 266.0 280.0C265.0 285.0 262.7 293.3 262.0 296.0" stroke="#1e1e1e" stroke-width="1.12"/><path d="M266.0 266.0L273.0 262.0" stroke="#1e1e1e" stroke-width="1.26"/><path d="M265.0 276.0L272.0 272.0" stroke="#1e1e1e" stroke-width="1.26"/><path d="M264.0 286.0L271.0 282.0" stroke="#1e1e1e" stroke-width="1.26"/><path d="M264.0 296.0L270.0 292.0" stroke="#1e1e1e" stroke-width="1.26"/><path d="M268.0 270.0C268.8 272.5 272.3 280.0 273.0 285.0C273.7 290.0 272.2 297.5 272.0 300.0" stroke="#1e1e1e" stroke-width="1.12"/><path d="M264.8 302.3C266.7 302.2 272.8 302.1 276.0 302.0C279.2 301.9 282.7 302.0 284.0 302.0" stroke="#1e1e1e" stroke-width="1.26"/><path d="M278.0 271.0C279.1 273.8 282.6 282.6 284.5 287.5C286.4 292.4 288.6 298.4 289.4 300.6" stroke="#1e1e1e" stroke-width="1.26"/><path d="M294.3 276.0C294.2 278.5 293.8 286.9 293.5 291.0C293.2 295.1 292.8 299.0 292.6 300.6" stroke="#1e1e1e" stroke-width="1.26"/><path d="M299.2 277.7C300.0 279.9 301.9 286.4 304.1 291.0C306.3 295.6 310.9 303.2 312.3 305.6" stroke="#1e1e1e" stroke-width="1.26"/><path d="M297.5 280.0C298.3 282.0 301.2 288.7 302.5 292.0C303.8 295.3 304.6 298.7 305.0 300.0" stroke="#1e1e1e" stroke-width="0.98"/><path d="M314.0 271.0C315.1 273.5 319.4 280.2 320.5 286.0C321.6 291.8 320.5 302.3 320.5 305.6" stroke="#1e1e1e" stroke-width="1.26"/><path d="M321.0 278.0L329.0 294.0" stroke="#1e1e1e" stroke-width="0.98"/><path d="M320.5 272.7C322.1 274.4 327.2 279.1 330.2 282.6C333.2 286.2 337.1 292.1 338.5 294.0" stroke="#1e1e1e" stroke-width="1.26"/><path d="M333.6 258.0C334.7 261.3 338.5 271.7 340.1 277.7C341.7 283.7 342.8 291.3 343.4 294.0" stroke="#1e1e1e" stroke-width="1.40"/><path d="M283.6 263.0C284.8 262.2 288.4 259.2 291.0 258.0C293.6 256.8 297.7 256.3 299.0 256.0" stroke="#1e1e1e" stroke-width="1.26"/><path d="M286.0 302.0C286.7 301.8 289.2 300.3 290.0 300.5C290.8 300.7 291.4 302.4 291.0 303.0C290.6 303.6 288.3 304.2 287.5 304.0C286.7 303.8 286.2 302.3 286.0 302.0" stroke="#1e1e1e" stroke-width="1.40"/><path d="M291.0 302.0C291.7 301.8 294.2 300.2 295.0 300.5C295.8 300.8 296.5 302.9 296.0 303.5C295.5 304.1 292.8 304.2 292.0 304.0C291.2 303.8 291.2 302.3 291.0 302.0" stroke="#1e1e1e" stroke-width="1.40"/><path d="M276.2 315.5C277.4 314.2 281.7 309.6 283.6 308.0C285.5 306.4 286.8 306.5 287.4 306.2" stroke="#1e1e1e" stroke-width="1.68"/><path d="M283.6 313.6C284.2 312.7 286.1 309.2 287.4 308.0C288.6 306.8 290.5 306.5 291.1 306.2" stroke="#1e1e1e" stroke-width="1.54"/><path d="M311.0 308.0C311.8 307.7 314.5 305.8 315.5 306.0C316.5 306.2 317.4 308.3 317.0 309.0C316.6 309.7 314.0 310.2 313.0 310.0C312.0 309.8 311.3 308.3 311.0 308.0" stroke="#1e1e1e" stroke-width="1.40"/><path d="M317.0 308.0C317.8 307.7 320.5 305.8 321.5 306.0C322.5 306.2 323.4 308.8 323.0 309.5C322.6 310.2 320.0 310.2 319.0 310.0C318.0 309.8 317.3 308.3 317.0 308.0" stroke="#1e1e1e" stroke-width="1.40"/><path d="M307.9 317.4C308.8 316.5 312.0 313.4 313.6 311.8C315.2 310.2 316.7 308.6 317.3 308.0" stroke="#1e1e1e" stroke-width="1.68"/><path d="M315.5 315.5L319.2 310.0" stroke="#1e1e1e" stroke-width="1.54"/><path d="M336.8 294.0C337.5 293.9 339.9 293.0 341.0 293.5C342.1 294.0 343.7 296.1 343.4 297.0C343.1 297.9 340.1 299.5 339.0 299.0C337.9 298.5 337.2 294.8 336.8 294.0" stroke="#1e1e1e" stroke-width="1.40"/><path d="M335.5 305.0C336.1 304.3 338.1 301.3 339.3 301.0C340.6 300.7 342.4 302.7 343.0 303.0" stroke="#1e1e1e" stroke-width="1.40"/><path d="M338.0 300.0L336.0 308.0" stroke="#1e1e1e" stroke-width="1.12"/><path d="M293.0 302.4C293.6 304.0 295.4 308.1 296.7 311.8C297.9 315.6 299.9 320.2 300.5 324.9C301.1 329.6 300.9 335.3 300.5 339.8C300.1 344.3 299.8 347.8 298.0 352.0C296.2 356.2 292.8 361.5 290.0 365.0C287.2 368.5 283.8 371.8 281.0 373.0C278.2 374.2 274.3 372.2 273.0 372.0" stroke="#1e1e1e" stroke-width="1.40"/><path d="M297.3 314.3L301.0 338.6" stroke="#555" stroke-width="0.98"/><path d="M283.6 334.2C284.6 334.4 287.9 334.8 289.3 335.1C290.7 335.4 291.6 335.9 292.0 336.0" stroke="#1e1e1e" stroke-width="1.40"/><path d="M280.0 345.4C280.9 345.2 284.3 344.2 285.5 344.5C286.7 344.8 287.5 346.2 287.4 347.3C287.3 348.4 285.4 350.4 285.0 351.0" stroke="#1e1e1e" stroke-width="1.40"/><circle cx="337.4" cy="329.3" r="1.2" stroke="#333" stroke-width="0.8" fill="none"/><path d="M353.1 332.6C354.2 332.5 358.2 331.0 359.6 331.8C361.0 332.6 362.1 336.4 361.3 337.6C360.5 338.8 355.8 338.9 354.7 339.2" stroke="#1e1e1e" stroke-width="1.82"/><path d="M300.0 353.6C303.1 353.3 312.5 352.6 318.7 351.7C324.9 350.8 331.8 349.6 337.4 348.0C343.0 346.4 348.6 343.9 352.3 342.3C356.0 340.7 358.6 339.2 359.8 338.6" stroke="#1e1e1e" stroke-width="1.54"/><path d="M286.0 356.0C288.3 356.8 294.6 360.5 300.0 361.0C305.4 361.5 312.5 360.1 318.7 359.2C324.9 358.3 331.5 357.0 337.4 355.4C343.3 353.8 349.6 351.9 354.2 349.8C358.8 347.7 363.2 344.1 365.0 343.0" stroke="#1e1e1e" stroke-width="1.54"/><path d="M290.0 368.0C294.7 367.5 308.7 366.0 318.0 364.8C327.3 363.6 337.3 362.9 346.0 361.0C354.7 359.1 366.0 354.8 370.0 353.6" stroke="#1e1e1e" stroke-width="1.40"/><path d="M316.8 349.8L316.8 362.9" stroke="#1e1e1e" stroke-width="1.54"/><path d="M335.5 349.8L333.6 362.9" stroke="#1e1e1e" stroke-width="1.54"/><path d="M354.2 338.6L352.3 361.0" stroke="#1e1e1e" stroke-width="1.40"/><path d="M290.0 375.5C294.6 374.9 308.2 373.1 317.3 371.9C326.4 370.7 335.8 369.4 344.6 368.2C353.4 367.0 365.8 365.2 370.0 364.6" stroke="#1e1e1e" stroke-width="1.26"/><path d="M290.0 386.4C294.6 385.2 308.2 381.2 317.3 379.1C326.4 377.0 335.8 375.2 344.6 373.7C353.4 372.2 365.8 370.6 370.0 370.0" stroke="#1e1e1e" stroke-width="1.26"/><path d="M327.4 246.2C329.6 245.6 336.8 242.4 340.5 242.4C344.2 242.4 346.8 243.9 349.8 246.2C352.9 248.5 356.1 253.2 358.8 256.0C361.5 258.8 364.8 261.8 366.0 263.0" stroke="#1e1e1e" stroke-width="1.54"/><path d="M335.0 250.6C336.9 251.3 342.2 253.2 346.2 254.8C350.2 256.4 356.7 259.5 358.8 260.4" stroke="#1e1e1e" stroke-width="2.10"/><path d="M335.0 247.8C337.3 248.7 344.8 251.3 349.0 253.4C353.2 255.5 356.7 258.3 360.2 260.4C363.7 262.5 366.7 263.6 370.0 266.0C373.3 268.4 378.2 273.1 379.9 274.5" stroke="#1e1e1e" stroke-width="0.98"/><path d="M338.0 246.0C340.8 246.8 348.8 248.0 355.0 251.0C361.2 254.0 369.8 260.0 375.0 264.0C380.2 268.0 384.2 273.2 386.0 275.0" stroke="#555" stroke-width="0.84"/><path d="M358.8 260.4C360.0 261.8 363.3 265.8 365.9 268.8C368.5 271.9 371.5 275.2 374.3 278.7C377.1 282.2 379.9 286.2 382.7 289.9C385.5 293.6 388.4 297.8 391.1 301.1C393.8 304.4 397.6 308.3 398.9 309.7" stroke="#1e1e1e" stroke-width="1.82"/><path d="M360.2 264.6C361.6 266.5 365.4 271.9 368.7 275.9C372.0 279.9 376.2 283.6 379.9 288.5C383.6 293.4 389.2 302.2 391.1 305.0" stroke="#1e1e1e" stroke-width="1.26"/><path d="M363.0 266.0C365.0 268.8 370.8 277.2 375.0 283.0C379.2 288.8 384.6 296.5 388.3 301.0C392.0 305.5 395.6 308.5 397.0 310.0" stroke="#1e1e1e" stroke-width="0.98"/><path d="M335.0 253.4C335.9 254.8 338.5 258.1 340.6 261.8C342.7 265.6 345.5 271.2 347.6 275.9C349.7 280.6 351.6 285.0 353.2 289.9C354.8 294.8 356.6 298.7 357.4 305.0C358.2 311.3 357.9 321.2 358.0 327.7C358.1 334.2 358.3 337.9 358.0 344.1C357.7 350.3 356.7 361.5 356.4 365.0" stroke="#1e1e1e" stroke-width="1.82"/><path d="M339.0 258.0C340.2 260.7 343.8 268.5 346.0 274.0C348.2 279.5 349.4 283.9 352.0 291.0C354.6 298.1 359.2 308.8 361.3 316.3C363.4 323.8 364.0 329.9 364.5 335.9C365.0 341.9 364.8 347.4 364.5 352.3C364.2 357.2 363.2 362.9 362.9 365.0" stroke="#1e1e1e" stroke-width="1.26"/><path d="M330.0 262.0C331.0 263.7 334.0 267.3 336.0 272.0C338.0 276.7 339.7 283.4 342.0 290.0C344.3 296.6 348.2 303.8 349.8 311.4C351.4 319.0 351.5 327.7 351.5 335.9C351.5 344.1 350.1 356.4 349.8 360.5" stroke="#1e1e1e" stroke-width="1.12"/><path d="M356.0 290.0C357.2 291.8 360.5 295.2 363.0 301.0C365.5 306.8 369.5 317.3 371.1 324.5C372.7 331.7 371.9 338.1 372.7 344.1C373.5 350.1 377.8 357.5 376.0 360.5C374.2 363.5 365.3 361.2 362.0 362.0C358.7 362.8 357.0 364.5 356.0 365.0" stroke="#1e1e1e" stroke-width="1.54"/><path d="M365.0 300.0C366.3 301.8 371.0 305.0 372.7 311.0C374.4 317.0 374.6 327.6 375.2 335.9C375.8 344.1 375.9 356.4 376.0 360.5" stroke="#1e1e1e" stroke-width="1.12"/><path d="M346.0 280.0C347.7 282.5 352.8 290.9 356.4 295.0C360.0 299.1 364.0 301.5 367.8 304.8C371.6 308.1 376.6 311.7 379.3 314.6C382.0 317.5 383.2 320.8 384.0 322.0" stroke="#1e1e1e" stroke-width="1.54"/><path d="M349.0 275.2L358.8 269.5" stroke="#1e1e1e" stroke-width="1.40"/><path d="M350.4 276.6C352.3 277.4 361.4 279.5 361.6 281.5C361.8 283.5 353.4 287.3 351.8 288.5" stroke="#1e1e1e" stroke-width="1.40"/><path d="M379.3 324.5C380.9 323.7 385.8 321.4 389.1 319.5C392.4 317.6 396.4 315.4 398.9 313.0C401.3 310.6 403.4 306.4 403.8 304.8C404.2 303.2 402.8 301.8 401.4 303.2C400.0 304.6 398.5 309.7 395.6 313.0C392.7 316.3 386.1 321.2 384.2 322.8" stroke="#1e1e1e" stroke-width="1.68"/><path d="M379.3 327.7C380.9 328.0 385.8 330.2 389.1 329.4C392.4 328.6 395.4 324.7 398.9 322.8C402.4 320.9 408.1 318.7 410.0 317.9" stroke="#1e1e1e" stroke-width="1.68"/><path d="M376.0 327.7L387.5 334.3" stroke="#1e1e1e" stroke-width="1.26"/><path d="M394.0 332.6C394.8 333.4 398.6 336.0 398.9 337.6C399.2 339.2 397.5 341.4 395.6 342.5C393.7 343.6 388.6 343.3 387.5 344.1C386.4 344.9 387.5 346.8 389.1 347.4C390.7 347.9 394.9 348.2 397.3 347.4C399.8 346.6 403.0 344.7 403.8 342.5C404.6 340.3 402.5 335.7 402.2 334.3" stroke="#1e1e1e" stroke-width="1.54"/><path d="M400.0 331.0C401.3 332.2 406.3 337.5 408.0 338.0C409.7 338.5 409.7 334.7 410.0 334.0" stroke="#1e1e1e" stroke-width="1.12"/><path d="M243.7 353.6C244.0 355.4 244.6 361.0 245.5 364.6C246.4 368.2 248.0 371.9 249.1 375.5C250.2 379.1 251.0 383.7 251.9 386.4C252.8 389.1 254.2 391.0 254.6 391.9" stroke="#1e1e1e" stroke-width="1.40"/><path d="M247.3 355.5C247.9 357.9 249.5 364.9 251.0 370.0C252.5 375.1 255.5 383.7 256.4 386.4" stroke="#1e1e1e" stroke-width="1.12"/><path d="M251.0 386.4C252.8 387.6 258.0 392.2 261.9 393.7C265.8 395.2 271.6 395.8 274.6 395.5C277.6 395.2 277.6 393.4 280.0 391.9C282.4 390.4 286.4 388.2 289.2 386.4C291.9 384.6 295.3 381.9 296.5 381.0" stroke="#1e1e1e" stroke-width="1.54"/><path d="M252.8 390.0C254.6 391.2 259.8 396.2 263.7 397.4C267.6 398.6 273.4 398.0 276.5 397.4C279.6 396.8 281.1 394.6 282.0 394.0" stroke="#1e1e1e" stroke-width="1.26"/><path d="M256.4 395.5C256.9 397.0 259.2 402.8 259.2 404.6C259.2 406.4 258.7 405.9 256.4 406.5C254.1 407.1 247.9 407.4 245.5 408.3C243.1 409.2 242.2 410.7 241.9 411.9C241.6 413.1 241.3 414.8 243.7 415.6C246.1 416.4 252.4 416.5 256.4 416.5C260.3 416.5 264.4 416.4 267.4 415.6C270.4 414.8 273.2 413.7 274.6 411.9C276.0 410.1 275.6 407.0 275.6 404.6C275.6 402.2 274.8 398.6 274.6 397.4" stroke="#1e1e1e" stroke-width="1.96"/><path d="M243.0 412.0C245.2 412.2 251.5 413.5 256.0 413.5C260.5 413.5 267.7 412.2 270.0 412.0" stroke="#1e1e1e" stroke-width="1.12"/><path d="M282.0 350.0C281.7 351.8 281.2 358.6 280.0 361.0C278.8 363.4 278.5 364.3 274.6 364.6C270.7 364.9 262.5 364.3 256.4 362.8C250.3 361.3 241.2 356.7 238.2 355.5" stroke="#1e1e1e" stroke-width="1.40"/><path d="M271.0 368.2C272.8 369.1 277.2 373.1 282.0 373.7C286.8 374.3 297.0 372.2 300.0 371.9" stroke="#1e1e1e" stroke-width="1.26"/><path d="M324.6 368.2C324.3 370.0 322.5 375.8 322.8 379.1C323.1 382.5 325.8 386.8 326.4 388.3" stroke="#1e1e1e" stroke-width="1.26"/><path d="M359.2 364.6C358.9 366.7 358.6 373.4 357.4 377.3C356.2 381.2 352.9 386.5 352.0 388.3" stroke="#1e1e1e" stroke-width="1.26"/><path d="M321.0 386.4C322.5 387.0 326.1 389.5 330.0 390.0C333.9 390.5 340.9 389.8 344.6 389.2C348.3 388.6 350.8 386.9 352.0 386.4" stroke="#1e1e1e" stroke-width="1.54"/><path d="M326.4 390.0C326.7 391.8 327.7 397.9 328.3 401.0C328.9 404.1 328.5 406.5 330.0 408.3C331.5 410.1 332.5 411.2 337.4 412.0C342.3 412.8 354.9 413.4 359.2 412.8C363.4 412.2 363.2 409.7 362.9 408.3C362.6 406.9 360.1 405.5 357.4 404.6C354.7 403.7 348.6 404.3 346.5 402.8C344.4 401.3 344.6 397.6 344.6 395.5C344.6 393.4 346.2 390.9 346.5 390.0" stroke="#1e1e1e" stroke-width="1.96"/><path d="M319.0 388.3C319.3 389.2 319.8 392.2 321.0 393.7C322.2 395.2 325.5 396.8 326.4 397.4" stroke="#1e1e1e" stroke-width="1.40"/><path d="M296.5 381.0L321.0 376.0" stroke="#1e1e1e" stroke-width="1.12"/><path d="M141.5 414.3C158.8 414.1 213.6 413.4 245.0 413.0C276.4 412.6 303.2 412.3 330.0 412.2C356.8 412.1 393.3 412.2 406.0 412.2" stroke="#8a8a8a" stroke-width="1.12"/><path d="M240.0 413.2C250.0 413.1 278.3 412.7 300.0 412.6C321.7 412.5 358.3 412.4 370.0 412.4" stroke="#6a6a6a" stroke-width="0.84"/><path d="M134.3 409.7L245.0 410.7" stroke="#c4c4c4" stroke-width="0.84"/></g></svg>
</body></html>
